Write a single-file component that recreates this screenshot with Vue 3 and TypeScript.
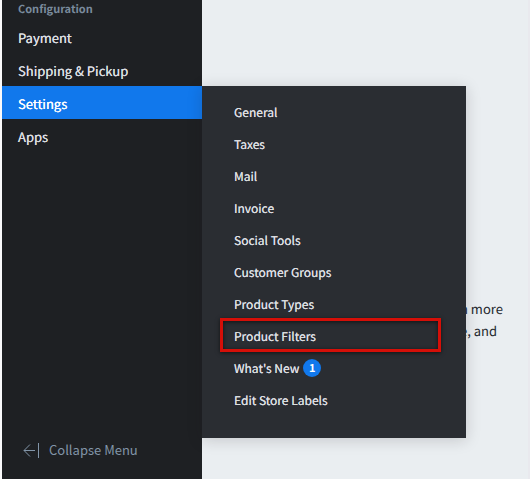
<script setup lang="ts">
interface SubItem {
  label: string
  badge?: number
  highlighted?: boolean
}

interface NavItem {
  label: string
  children?: SubItem[]
}

const items: NavItem[] = [
  { label: 'Payment' },
  { label: 'Shipping & Pickup' },
  {
    label: 'Settings',
    children: [
      { label: 'General' },
      { label: 'Taxes' },
      { label: 'Mail' },
      { label: 'Invoice' },
      { label: 'Social Tools' },
      { label: 'Customer Groups' },
      { label: 'Product Types' },
      { label: 'Product Filters', highlighted: true },
      { label: "What's New", badge: 1 },
      { label: 'Edit Store Labels' },
    ],
  },
  { label: 'Apps' },
]
</script>

<template>
  <div class="page">
    <aside class="sidebar">
      <nav>
        <h2 class="heading">Configuration</h2>
        <ul class="list">
          <li v-for="item in items" :key="item.label" class="entry">
            <a href="#" class="link" :class="{ active: item.children }">{{ item.label }}</a>
            <ul v-if="item.children" class="list flyout">
              <li v-for="sub in item.children" :key="sub.label">
                <a href="#" class="sublink" :class="{ highlighted: sub.highlighted }">
                  {{ sub.label }}
                  <span v-if="sub.badge" class="badge">{{ sub.badge }}</span>
                </a>
              </li>
            </ul>
          </li>
        </ul>
      </nav>
      <button type="button" class="collapse">
        <svg width="17" height="16" viewBox="0 0 17 16" fill="none" stroke="currentColor" aria-hidden="true">
          <path d="M7 2.5 1 8.5l6 6M1 8.5h11M15.5 1v15" />
        </svg>
        Collapse Menu
      </button>
    </aside>
    <main class="content">
      <p class="note">n more<br />e, and</p>
    </main>
  </div>
</template>

<style>
body {
  background: #fafafb;
}
</style>

<style scoped>
.page {
  display: flex;
  box-sizing: border-box;
  min-height: 100vh;
  padding: 0 2px;
  font-family: "Noto Sans CJK SC", "Noto Sans", sans-serif;
  font-size: 13px;
  text-rendering: geometricPrecision;
  color: #24282d;
  background: linear-gradient(to right, #fafafb 50%, #e9e9ee 50%);
}

.sidebar {
  display: flex;
  flex: 0 0 200px;
  flex-direction: column;
  justify-content: space-between;
  background: #1e2023;
}

.heading {
  margin: 0;
  padding: 0 16px 2px;
  font-size: 11px;
  font-weight: 700;
  line-height: 18px;
  color: #7a8b9d;
}

.list {
  margin: 0;
  padding: 0;
  list-style: none;
}

.entry {
  position: relative;
}

.link {
  display: block;
  padding: 2px 16px 0;
  font-weight: 400;
  line-height: 31px;
  color: #dddfe1;
  text-decoration: none;
  text-shadow: 0 0 currentColor;
}

.link.active {
  color: #fff;
  background: #1178ec;
}

.flyout {
  position: absolute;
  top: 0;
  left: 100%;
  z-index: 1;
  width: 264px;
  box-sizing: border-box;
  padding: 10px 18px 22px;
  background: #2a2d32;
  box-shadow: 0 2px 14px rgba(30, 20, 30, 0.18);
}

.sublink {
  display: flex;
  align-items: center;
  gap: 4px;
  height: 32px;
  padding: 0 14px;
  font-size: 12px;
  font-weight: 400;
  color: #dddfe1;
  text-decoration: none;
  text-shadow: 0 0 currentColor;
}

.sublink.highlighted {
  position: relative;
}

.sublink.highlighted::after {
  position: absolute;
  inset: -2px 7px 0 0;
  border: 3px solid #d50f08;
  box-shadow: 0 1px 4px rgba(0, 0, 0, 0.6), inset 0 1px 4px rgba(0, 0, 0, 0.6);
  content: "";
}

.badge {
  width: 18px;
  border-radius: 9px;
  font-size: 11px;
  font-weight: 700;
  line-height: 18px;
  text-align: center;
  color: #fff;
  text-shadow: none;
  background: #1178ec;
}

.collapse {
  display: flex;
  align-items: center;
  gap: 9px;
  margin: 0;
  padding: 16px 21px 17px;
  border: 0;
  font: inherit;
  line-height: 24px;
  color: #8295a8;
  background: none;
}

.content {
  flex: 1;
  padding: 298px 24px 0 258px;
  background: #eaeef1;
}

.note {
  margin: 0;
  line-height: 22px;
  white-space: nowrap;
}
</style>
